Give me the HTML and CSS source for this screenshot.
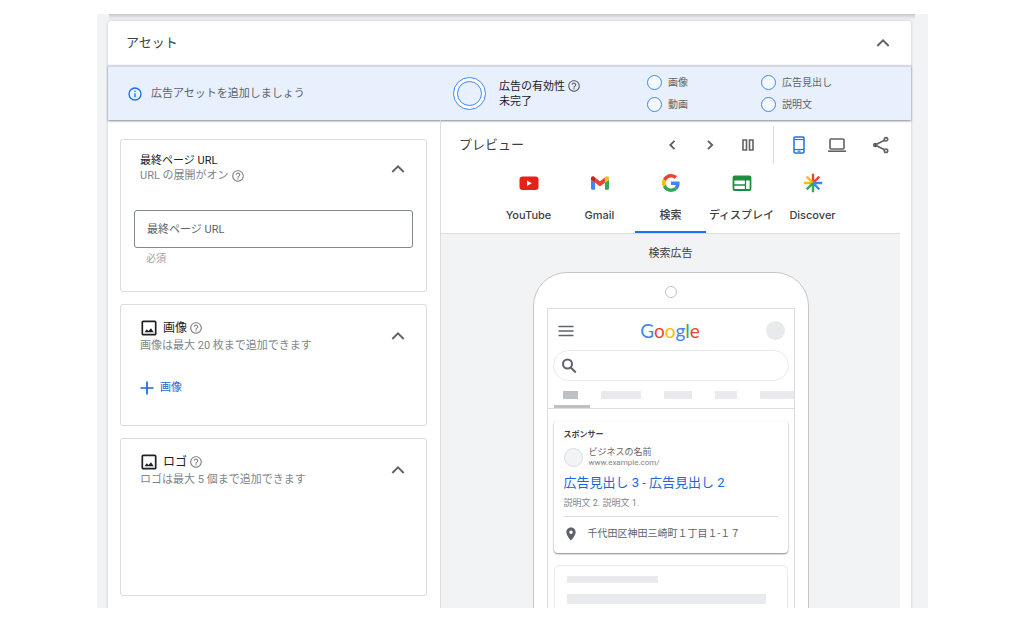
FILE: index.html
```html
<!DOCTYPE html>
<html lang="ja">
<head>
<meta charset="utf-8">
<title>アセット</title>
<link rel="stylesheet" href="styles.css">
</head>
<body>
<svg class="defs" aria-hidden="true">
  <symbol id="help" viewBox="0 0 24 24"><path fill="currentColor" d="M11 18h2v-2h-2v2zm1-16C6.48 2 2 6.48 2 12s4.480 10 10 10 10-4.480 10-10S17.520 2 12 2zm0 18c-4.410 0-8-3.590-8-8s3.590-8 8-8 8 3.590 8 8-3.590 8-8 8zm0-14c-2.210 0-4 1.790-4 4h2c0-1.100.9-2 2-2s2 .9 2 2c0 2-3 1.750-3 5h2c0-2.250 3-2.500 3-5 0-2.210-1.790-4-4-4z"/></symbol>
  <symbol id="up" viewBox="0 0 14 14"><path fill="none" stroke="currentColor" stroke-width="1.900" d="M1.300 10L7 4.300l5.700 5.700"/></symbol>
  <symbol id="image" viewBox="0 0 16 16"><rect x="1.300" y="1.300" width="13.400" height="13.400" rx="1" fill="none" stroke="currentColor" stroke-width="1.700"/><path fill="currentColor" d="M3.500 12.200l2.300-3 1.700 1.900L10 8.200l2.700 4z"/></symbol>
</svg>
<main class="stage">
  <section class="panel">
    <header class="panel-head">
      <h1 class="title">アセット</h1>
      <button class="icon-btn" aria-label="閉じる"><svg class="i14"><use href="#up"/></svg></button>
    </header>
    <div class="banner">
      <p class="notice">
        <svg class="i16 blue" viewBox="0 0 24 24"><path fill="currentColor" d="M11 7h2v2h-2zm0 4h2v6h-2zm1-9a10 10 0 100 20 10 10 0 000-20zm0 18a8 8 0 110-16 8 8 0 010 16z"/></svg>
        広告アセットを追加しましょう
      </p>
      <div class="strength">
        <span class="ring"></span>
        <div>
          <div class="line">広告の有効性 <svg class="i14"><use href="#help"/></svg></div>
          <div>未完了</div>
        </div>
      </div>
      <ul class="checks"><li>画像</li><li>動画</li></ul>
      <ul class="checks"><li>広告見出し</li><li>説明文</li></ul>
    </div>
    <div class="columns">
      <div class="forms">
        <section class="card">
          <header class="card-head">
            <div>
              <h2><label for="url">最終ページ URL</label></h2>
              <p class="line sub">URL の展開がオン <svg class="i14"><use href="#help"/></svg></p>
            </div>
            <button class="icon-btn" aria-label="閉じる"><svg class="i14"><use href="#up"/></svg></button>
          </header>
          <input class="field" id="url" type="text" placeholder="最終ページ URL">
          <p class="hint">必須</p>
        </section>
        <section class="card card-image">
          <header class="card-head">
            <div>
              <h2 class="line big"><svg class="i16"><use href="#image"/></svg>画像 <svg class="i14 grey"><use href="#help"/></svg></h2>
              <p class="sub">画像は最大 20 枚まで追加できます</p>
            </div>
            <button class="icon-btn" aria-label="閉じる"><svg class="i14"><use href="#up"/></svg></button>
          </header>
          <button class="add"><svg class="i14" viewBox="0 0 14 14"><path stroke="currentColor" stroke-width="1.700" d="M7 .5v13M.5 7h13"/></svg>画像</button>
        </section>
        <section class="card card-logo">
          <header class="card-head">
            <div>
              <h2 class="line big"><svg class="i16"><use href="#image"/></svg>ロゴ <svg class="i14 grey"><use href="#help"/></svg></h2>
              <p class="sub">ロゴは最大 5 個まで追加できます</p>
            </div>
            <button class="icon-btn" aria-label="閉じる"><svg class="i14"><use href="#up"/></svg></button>
          </header>
        </section>
      </div>
      <section class="preview">
        <header class="toolbar">
          <h2 class="title">プレビュー</h2>
          <button class="icon-btn" aria-label="前へ"><svg class="i18" viewBox="0 0 18 18"><path fill="none" stroke="currentColor" stroke-width="1.900" d="M11.500 4.800L7.300 9l4.200 4.200"/></svg></button>
          <button class="icon-btn" aria-label="次へ"><svg class="i18" viewBox="0 0 18 18"><path fill="none" stroke="currentColor" stroke-width="1.900" d="M7 4.800L11.200 9 7 13.200"/></svg></button>
          <button class="icon-btn" aria-label="並べて表示"><svg class="i18" viewBox="0 0 18 18"><path fill="none" stroke="currentColor" stroke-width="1.600" d="M4 4h3.500v10H4zM10.500 4H14v10h-3.500z"/></svg></button>
          <span class="divider"></span>
          <button class="icon-btn blue" aria-label="モバイル"><svg class="i18" viewBox="0 0 18 18"><rect x="4" y="1" width="10" height="16" rx="1" fill="none" stroke="currentColor" stroke-width="1.500"/><path stroke="currentColor" stroke-width="1.200" d="M4 3.500h10M4 13.500h10M7.500 15.200h3"/></svg></button>
          <button class="icon-btn" aria-label="パソコン"><svg class="i18" viewBox="0 0 18 18"><rect x="2" y="3" width="14" height="10" rx="1" fill="none" stroke="currentColor" stroke-width="1.600"/><path stroke="currentColor" stroke-width="1.600" d="M0 15.200h18"/></svg></button>
          <button class="icon-btn share" aria-label="共有"><svg class="i18" viewBox="0 0 18 18"><g fill="none" stroke="currentColor" stroke-width="1.700"><path d="M4 8.400l8.500-4.200M4 9.600l8.500 4.200"/><circle cx="14" cy="3.300" r="1.700"/><circle cx="14" cy="14.700" r="1.700"/></g><circle cx="3.200" cy="9" r="2.300" fill="currentColor"/></svg></button>
        </header>
        <nav class="tabs">
          <button class="tab"><svg class="i20" viewBox="0 0 20 20"><rect x="0.500" y="3.500" width="19" height="13.500" rx="3" fill="#e62117"/><path fill="#fff" d="M8 7.500v5.500l4.800-2.750z"/></svg>YouTube</button>
          <button class="tab"><svg class="i18" viewBox="52 42 88 66"><path fill="#4285f4" d="M58 108h14V74L52 59v43c0 3.320 2.690 6 6 6"/><path fill="#34a853" d="M120 108h14c3.320 0 6-2.690 6-6V59l-20 15"/><path fill="#fbbc04" d="M120 48v26l20-15v-8c0-7.420-8.470-11.650-14.400-7.200"/><path fill="#ea4335" d="M72 74V48l24 18 24-18v26L96 92"/><path fill="#c5221f" d="M52 51v8l20 15V48l-5.600-4.200c-5.940-4.450-14.400-.22-14.400 7.200"/></svg>Gmail</button>
          <button class="tab active"><svg class="i18" viewBox="0 0 48 48"><path fill="#ea4335" d="M24 9.500c3.540 0 6.710 1.220 9.210 3.600l6.850-6.850C35.900 2.380 30.470 0 24 0 14.620 0 6.510 5.380 2.560 13.220l7.980 6.190C12.430 13.720 17.740 9.500 24 9.500z"/><path fill="#4285f4" d="M46.980 24.550c0-1.570-.15-3.090-.38-4.550H24v9.020h12.940c-.58 2.960-2.260 5.480-4.780 7.180l7.730 6c4.510-4.180 7.090-10.360 7.090-17.650z"/><path fill="#fbbc05" d="M10.530 28.590a14.500 14.500 0 010-9.180l-7.980-6.190a24 24 0 000 21.560l7.980-6.190z"/><path fill="#34a853" d="M24 48c6.480 0 11.930-2.130 15.890-5.810l-7.730-6c-2.150 1.450-4.920 2.300-8.160 2.300-6.260 0-11.570-4.220-13.470-9.910l-7.980 6.190C6.510 42.620 14.620 48 24 48z"/></svg>検索</button>
          <button class="tab"><svg class="i20" viewBox="0 0 20 20"><rect x="1.500" y="3.500" width="17" height="13.500" rx="1" fill="none" stroke="#1e8e3e" stroke-width="1.800"/><path fill="#1e8e3e" d="M1 3h18v4.500H1z"/><path fill="none" stroke="#1e8e3e" stroke-width="1.300" d="M13.500 7v10M2 12h11.500"/></svg>ディスプレイ</button>
          <button class="tab"><svg class="i20" viewBox="0 0 20 20"><g stroke-width="2.400"><path stroke="#ea4335" d="M10 10V.8M10 10l6.300-6.300"/><path stroke="#fbbc04" d="M10 10L3.700 3.700M10 10H.8"/><path stroke="#34a853" d="M10 10l-6.300 6.300M10 10v9.200"/><path stroke="#4285f4" d="M10 10l6.300 6.300M10 10h9.200"/></g></svg>Discover</button>
        </nav>
        <div class="canvas">
          <h3 class="caption">検索広告</h3>
          <div class="phone">
            <span class="camera"></span>
            <div class="screen">
              <div class="topbar">
                <svg class="i16" viewBox="0 0 16 16"><path stroke="currentColor" stroke-width="1.600" d="M.5 3.500h15M.5 8h15M.5 12.500h15"/></svg>
                <span class="logo"><span class="lb">G</span><span class="lr">o</span><span class="ly">o</span><span class="lb">g</span><span class="lg">l</span><span class="lr">e</span></span>
                <span class="avatar"></span>
              </div>
              <div class="search"><svg class="i16" viewBox="0 0 16 16"><g fill="none" stroke="currentColor" stroke-width="2"><circle cx="6.500" cy="6" r="4.500"/><path d="M9.800 9.500l5 5"/></g></svg></div>
              <div class="chips"><i class="on"></i><i class="w40"></i><i class="w28"></i><i class="w22"></i><i class="w40"></i></div>
              <article class="ad">
                <div class="sponsor">スポンサー</div>
                <div class="biz">
                  <span class="avatar ring-avatar"></span>
                  <div><div class="biz-name">ビジネスの名前</div><div class="biz-url">www.example.com/</div></div>
                </div>
                <a class="headline" href="#">広告見出し 3 - 広告見出し 2</a>
                <p class="desc">説明文 2. 説明文 1.</p>
                <p class="address"><svg class="i14" viewBox="0 0 24 24"><path fill="currentColor" d="M12 1C7.600 1 4 4.600 4 9c0 6 8 14 8 14s8-8 8-14c0-4.400-3.600-8-8-8zm0 11a3 3 0 110-6 3 3 0 010 6z"/></svg>千代田区神田三崎町１丁目１-１７</p>
              </article>
              <div class="ghost"><i class="short"></i><i class="long"></i></div>
            </div>
          </div>
        </div>
      </section>
    </div>
  </section>
</main>
</body>
</html>
```
FILE: styles.css
```css
* { box-sizing: border-box; }
body {
  margin: 0;
  padding: 14px 85px 19px 97px;
  background: #fff;
  color: #3c4043;
  font: 11px/16px Roboto, "Noto Sans CJK JP", sans-serif;
}
h1, h2, h3, p, ul { margin: 0; padding: 0; font-size: inherit; font-weight: 400; }
ul { list-style: none; }
button { border: 0; padding: 0; background: none; color: inherit; font: inherit; cursor: pointer; }
svg { flex: none; display: block; }
.defs { position: absolute; width: 0; height: 0; }
.i14 { width: 14px; height: 14px; }
.i16 { width: 16px; height: 16px; }
.i18 { width: 18px; height: 18px; }
.i20 { width: 20px; height: 20px; }
.blue { color: #1a73e8; }
.grey { color: #80868b; }
.stage {
  height: calc(100vh - 33px);
  padding: 7px 17px 0 11px;
  overflow: hidden;
  background: linear-gradient(#c4c6c8, #e8eaed 4px, transparent 7px) 50% 0 / 97% 7px no-repeat #f1f3f4;
}
.panel {
  display: flex;
  flex-direction: column;
  height: 100%;
  background: #fff;
  border-radius: 3px 3px 0 0;
  box-shadow: 0 0 3px #bdc1c6;
}
.panel-head { display: flex; justify-content: space-between; align-items: center; padding: 0 15px 0 18px; min-height: 44px; }
.title { font-size: 13px; color: #3c4043; }
.icon-btn { display: flex; align-items: center; justify-content: center; width: 26px; height: 26px; color: #5f6368; }
.icon-btn.blue { color: #1a73e8; }
.banner {
  display: grid;
  grid-template-columns: 345fr 194fr 114fr 150fr;
  align-items: center;
  min-height: 55px;
  background: #e8f0fe;
  border-top: 2px solid #d5d9df;
  box-shadow: 0 1px 2px #80868b;
}
.notice { display: flex; align-items: center; gap: 8px; padding-left: 19px; color: #5f6368; }
.strength { display: flex; align-items: center; gap: 13px; line-height: 15px; color: #202124; }
.ring { display: flex; align-items: center; justify-content: center; width: 33px; height: 33px; border: 1px solid #4285f4; border-radius: 50%; background: #fff; }
.ring::before { content: ""; width: 23px; height: 23px; border: 1px solid #4285f4; border-radius: 50%; background: #e8f0fe; }
.line { display: flex; align-items: center; gap: 2px; }
.strength svg { color: #5f6368; }
.checks { display: grid; gap: 6px; font-size: 10px; color: #5f6368; }
.checks li { display: flex; align-items: center; gap: 6px; }
.checks li::before { content: ""; width: 13px; height: 13px; border: 1px solid #4285f4; border-radius: 50%; background: #f4f8ff; }
.columns { display: grid; grid-template-columns: 333fr 470fr; flex: 1; min-height: 0; }
.forms { display: flex; flex-direction: column; gap: 12px; min-width: 0; min-height: 0; padding: 19px 13px 0 12px; border-right: 1px solid #dadce0; }
.card { flex: none; padding: 13px 13px 24px; border: 1px solid #dadce0; border-radius: 3px; }
.card-head { display: flex; justify-content: space-between; align-items: center; padding: 0 2px 0 6px; line-height: 15px; }
.card h2 { color: #202124; }
.card .big { font-size: 12px; line-height: 20px; gap: 2px; }
.big .i16 { margin: 0 4px 0 1px; }
.sub { color: #80868b; line-height: 16px; }
.field { display: block; width: 100%; height: 38px; margin-top: 26px; padding: 0 12px; border: 1px solid #80868b; border-radius: 3px; font: inherit; color: #202124; }
.field::placeholder { color: #5f6368; opacity: 1; }
.hint { padding: 3px 12px 0; font-size: 10px; color: #9aa0a6; }
.add { display: flex; align-items: center; gap: 6px; margin: 26px 6px 0; color: #1a66e0; }
.card-image { padding-bottom: 29px; }
.card-logo { padding-bottom: 107px; }
.preview { display: flex; flex-direction: column; min-width: 0; min-height: 0; padding-right: 11px; }
.toolbar { display: flex; align-items: center; gap: 12px; margin-right: -11px; padding: 6px 17px 3px 18px; }
.toolbar .title { margin-right: auto; }
.divider { width: 1px; height: 38px; background: #dadce0; }
.share { margin-left: 6px; }
.tabs { display: flex; justify-content: center; border-bottom: 1px solid #dadce0; }
.tab { display: flex; flex-direction: column; align-items: center; justify-content: space-between; width: 71px; height: 66px; padding: 6px 0 8px; border-bottom: 2px solid transparent; font: 500 11px/16px Inter, "Noto Sans CJK JP", sans-serif; white-space: nowrap; }
.tab svg { height: 20px; }
.tab.active { border-bottom-color: #1a73e8; }
.canvas { flex: 1; min-height: 0; overflow: hidden; background: #f1f3f4; text-align: center; }
.caption { padding: 12px 0 10px; }
.phone { width: 60%; min-width: 276px; margin: 0 auto; padding: 13px 13px 0; background: #fff; border: 1px solid #c4c7c9; border-radius: 34px 34px 0 0; }
.camera { display: block; width: 12px; height: 12px; margin: 0 auto 10px; border: 1px solid #bdc1c6; border-radius: 50%; }
.screen { border: 1px solid #dadce0; border-bottom: 0; text-align: left; overflow: hidden; }
.topbar { display: flex; justify-content: space-between; align-items: center; padding: 11px 8px 9px 10px; color: #5f6368; }
.logo { font: 19px/21px Lato, sans-serif; }
.lb { color: #4285f4; } .lr { color: #ea4335; } .ly { color: #fbbc04; } .lg { color: #34a853; }
.avatar { flex: none; width: 19px; height: 19px; border-radius: 50%; background: #e8eaed; }
.search { display: flex; align-items: center; height: 31px; margin: 0 5px; padding-left: 7px; border: 1px solid #e8eaed; border-radius: 16px; color: #5f6368; }
.chips { display: flex; gap: 23px; height: 28px; margin-bottom: 12px; padding: 10px 0 0 6px; border-bottom: 1px solid #dadce0; }
.chips i { flex: none; height: 8px; background: #e8eaed; }
.chips .on { width: 36px; height: 17px; margin-right: -12px; background: linear-gradient(#bdc1c6, #bdc1c6) 9px 0 / 15px 8px no-repeat, linear-gradient(#bdc1c6, #bdc1c6) 0 14px / 36px 3px no-repeat; }
.w40 { width: 40px; } .w28 { width: 28px; } .w22 { width: 22px; }
.ad { margin: 0 6px 12px; padding: 8px 10px 12px; border-radius: 4px; box-shadow: 0 1px 2px #80868b; }
.sponsor { font-size: 8px; font-weight: 700; line-height: 12px; }
.biz { display: flex; align-items: center; gap: 6px; padding: 5px 0 4px; }
.ring-avatar { border: 1px solid #dadce0; background: #f1f3f4; }
.biz-name { font-size: 9px; line-height: 12px; color: #5f6368; }
.biz-url { font-size: 8px; line-height: 10px; color: #80868b; }
.headline { display: block; font-size: 13px; line-height: 22px; color: #1a66e0; text-decoration: none; white-space: nowrap; }
.desc { padding: 2px 0 6px; font-size: 9px; line-height: 14px; color: #80868b; border-bottom: 1px solid #dadce0; }
.address { display: flex; align-items: center; gap: 10px; padding-top: 10px; font-size: 10px; line-height: 14px; white-space: nowrap; color: #5f6368; }
.ghost { margin: 0 6px; padding: 10px 12px 30px; border: 1px solid #e8eaed; border-radius: 5px 5px 0 0; }
.ghost i { display: block; background: #e8eaed; }
.short { width: 44%; height: 7px; margin-bottom: 11px; }
.long { width: 96%; height: 10px; }
```
